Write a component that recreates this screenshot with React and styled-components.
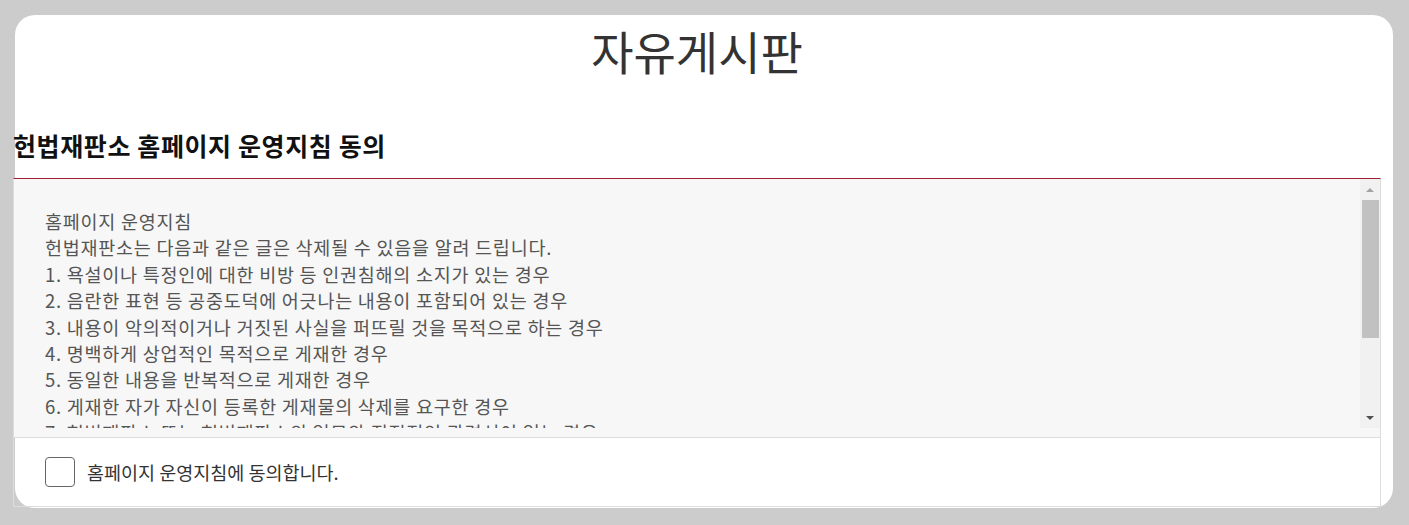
import styled, { createGlobalStyle } from 'styled-components';

const GlobalStyle = createGlobalStyle`
  html, body {
    margin: 0;
    padding: 0;
    background: #cccccc;
  }
  body {
    font-family: "Noto Sans CJK KR", "Noto Sans", sans-serif;
  }
  * {
    box-sizing: border-box;
  }
`;

const Page = styled.div`
  padding: 15px;
  min-height: 525px;
`;

const Card = styled.div`
  width: 1378px;
  height: 493px;
  background: #fff;
  border-radius: 20px;
`;

const Content = styled.div`
  width: 1368px;
  margin-left: -2px;
`;

const Title = styled.h1`
  margin: 0;
  font-size: 46px;
  font-weight: 400;
  line-height: 70px;
  color: #333;
  text-align: center;
`;

const SectionTitle = styled.h2`
  margin: 43px 0 16px;
  font-size: 25px;
  font-weight: 700;
  letter-spacing: 0.6px;
  line-height: 34px;
  color: #111;
`;

const AgreeBox = styled.div`
  border: 1px solid #dddddd;
  border-top: 1px solid #a31d31;
`;

const ScrollArea = styled.div`
  display: flex;
  height: 258px;
  padding-bottom: 9px;
  background: #f7f7f7;
`;

const TextPane = styled.div`
  flex: 1;
  overflow: hidden;
  padding: 29px 30px 0 31px;
  font-size: 18.5px;
  letter-spacing: 0.75px;
  line-height: 26.4px;
  color: #555;
`;

const Line = styled.p`
  margin: 0;
  white-space: nowrap;
`;

const ScrollBar = styled.div`
  width: 20px;
  display: flex;
  flex-direction: column;
  background: #f1f1f1;
`;

const ArrowButton = styled.div`
  height: 21px;
  display: flex;
  align-items: center;
  justify-content: center;

  &::after {
    content: '';
    width: 0;
    height: 0;
    border-left: 4px solid transparent;
    border-right: 4px solid transparent;
    ${props => props.$down
      ? 'border-top: 4px solid #505050;'
      : 'border-bottom: 4px solid #a3a3a3;'}
  }
`;

const Track = styled.div`
  flex: 1;
`;

const Thumb = styled.div`
  height: 138px;
  margin: 0 1px 0 2px;
  background: #c1c1c1;
`;

const Footer = styled.label`
  display: flex;
  align-items: center;
  gap: 12px;
  height: 69px;
  padding-left: 31px;
  border-top: 1px solid #dddddd;
  font-size: 18.5px;
  color: #333;
  cursor: pointer;
`;

const CheckBox = styled.span`
  width: 30px;
  height: 30px;
  border: 1px solid #666;
  border-radius: 4px;
  background: #fff;
`;

const rules = [
  '홈페이지 운영지침',
  '헌법재판소는 다음과 같은 글은 삭제될 수 있음을 알려 드립니다.',
  '1. 욕설이나 특정인에 대한 비방 등 인권침해의 소지가 있는 경우',
  '2. 음란한 표현 등 공중도덕에 어긋나는 내용이 포함되어 있는 경우',
  '3. 내용이 악의적이거나 거짓된 사실을 퍼뜨릴 것을 목적으로 하는 경우',
  '4. 명백하게 상업적인 목적으로 게재한 경우',
  '5. 동일한 내용을 반복적으로 게재한 경우',
  '6. 게재한 자가 자신이 등록한 게재물의 삭제를 요구한 경우',
  '7. 헌법재판소 또는 헌법재판소의 업무와 직접적인 관련성이 없는 경우',
];

const App = () => {
  return (
    <Page>
      <GlobalStyle />
      <Card>
        <Content>
          <Title>자유게시판</Title>
          <SectionTitle>헌법재판소 홈페이지 운영지침 동의</SectionTitle>

          <AgreeBox>
            <ScrollArea>
              <TextPane>
                {rules.map(line => (
                  <Line key={line}>{line}</Line>
                ))}
              </TextPane>
              <ScrollBar>
                <ArrowButton />
                <Track>
                  <Thumb />
                </Track>
                <ArrowButton $down />
              </ScrollBar>
            </ScrollArea>

            <Footer>
              <CheckBox />
              홈페이지 운영지침에 동의합니다.
            </Footer>
          </AgreeBox>
        </Content>
      </Card>
    </Page>
  );
};

export default App;
